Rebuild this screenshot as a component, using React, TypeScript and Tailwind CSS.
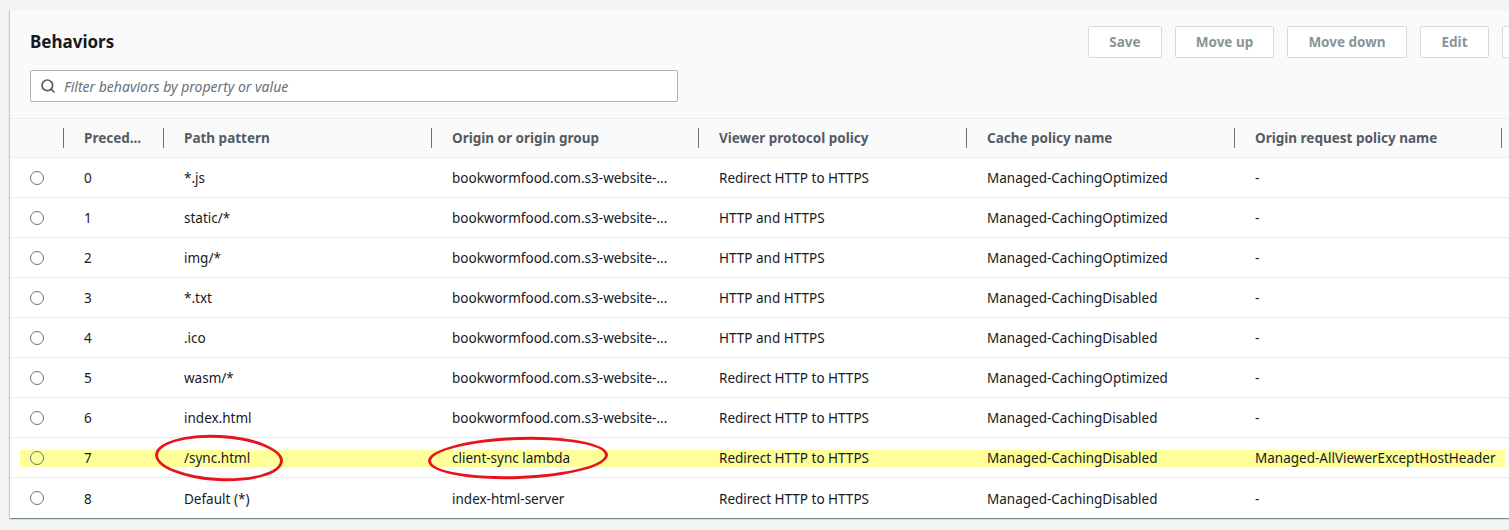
import { Search } from "lucide-react";

type Row = {
  prec: string;
  path: string;
  origin: string;
  viewer: string;
  cache: string;
  request: string;
  marked?: boolean;
};

const rows: Row[] = [
  { prec: "0", path: "*.js", origin: "bookwormfood.com.s3-website-...", viewer: "Redirect HTTP to HTTPS", cache: "Managed-CachingOptimized", request: "-" },
  { prec: "1", path: "static/*", origin: "bookwormfood.com.s3-website-...", viewer: "HTTP and HTTPS", cache: "Managed-CachingOptimized", request: "-" },
  { prec: "2", path: "img/*", origin: "bookwormfood.com.s3-website-...", viewer: "HTTP and HTTPS", cache: "Managed-CachingOptimized", request: "-" },
  { prec: "3", path: "*.txt", origin: "bookwormfood.com.s3-website-...", viewer: "HTTP and HTTPS", cache: "Managed-CachingDisabled", request: "-" },
  { prec: "4", path: ".ico", origin: "bookwormfood.com.s3-website-...", viewer: "HTTP and HTTPS", cache: "Managed-CachingDisabled", request: "-" },
  { prec: "5", path: "wasm/*", origin: "bookwormfood.com.s3-website-...", viewer: "Redirect HTTP to HTTPS", cache: "Managed-CachingOptimized", request: "-" },
  { prec: "6", path: "index.html", origin: "bookwormfood.com.s3-website-...", viewer: "Redirect HTTP to HTTPS", cache: "Managed-CachingDisabled", request: "-" },
  { prec: "7", path: "/sync.html", origin: "client-sync lambda", viewer: "Redirect HTTP to HTTPS", cache: "Managed-CachingDisabled", request: "Managed-AllViewerExceptHostHeader", marked: true },
  { prec: "8", path: "Default (*)", origin: "index-html-server", viewer: "Redirect HTTP to HTTPS", cache: "Managed-CachingDisabled", request: "-" },
];

// the last one runs past the window edge, only its border shows
const buttons = [
  { label: "Save", w: "w-[74px]" },
  { label: "Move up", w: "w-[99px]" },
  { label: "Move down", w: "w-[120px]" },
  { label: "Edit", w: "w-[69px]" },
];

const cols = "grid grid-cols-[53px_100px_268px_267px_268px_268px_267px_40px]";

function HeaderCell({ label }: { label: string }) {
  return (
    <div className="flex items-center h-full">
      <div className="w-px h-[20px] bg-[#687078]" />
      <span className="pl-5 font-bold text-[#545b64]">{label}</span>
    </div>
  );
}

export default function App() {
  return (
    <div
      className="w-[1509px] h-[530px] overflow-hidden bg-[#f2f3f3] pt-[10px] pl-[10px] text-[13.5px] text-[#16191f]"
      style={{ fontFamily: '"Noto Sans", "Open Sans", sans-serif' }}
    >
      <div className="w-[1560px] bg-white shadow-[0_1px_1px_0_rgba(0,28,36,0.3),1px_1px_1px_0_rgba(0,28,36,0.15),-1px_1px_1px_0_rgba(0,28,36,0.15)]">
        <div className="bg-[#fafafa] px-5 pt-[16px] pb-[16px] border-b border-[#eaeded]">
          <div className="flex items-center">
            <h2 className="text-[17px] font-bold leading-[32px]">Behaviors</h2>
            <div className="ml-auto flex gap-[13px]">
              {buttons.map((b) => (
                <div
                  key={b.label}
                  className={`${b.w} h-[32px] flex items-center justify-center bg-white border border-[#d5dbdb] rounded-[2px] font-bold text-[#879596]`}
                >
                  {b.label}
                </div>
              ))}
              <div className="w-[48px] h-[32px] bg-white border border-[#d5dbdb] rounded-[2px]" />
            </div>
          </div>
          <div className="mt-[12px] w-[648px] h-[32px] flex items-center border border-[#aab7b8] rounded-[2px] bg-white px-[9px]">
            <Search size={16} strokeWidth={2.5} className="text-[#545b64]" />
            <span className="ml-2 italic text-[14px] text-[#687078]">
              Filter behaviors by property or value
            </span>
          </div>
        </div>

        <div className={`${cols} h-[39px] bg-[#fafafa] border-b border-[#eaeded]`}>
          <div />
          <HeaderCell label="Preced..." />
          <HeaderCell label="Path pattern" />
          <HeaderCell label="Origin or origin group" />
          <HeaderCell label="Viewer protocol policy" />
          <HeaderCell label="Cache policy name" />
          <HeaderCell label="Origin request policy name" />
          <HeaderCell label="" />
        </div>

        {rows.map((r, i) => (
          <div
            key={r.prec}
            className={`${cols} h-[40px] items-center ${i < rows.length - 1 ? "border-b border-[#eaeded]" : ""}`}
          >
            <div className="relative h-full flex items-center justify-center pl-[1px]">
              {r.marked && <div className="absolute left-[10px] right-0 top-[12px] h-[17px] bg-[#ffff99]" />}
              <div className="relative w-[14px] h-[14px] rounded-full border-[1.5px] border-[#687078]" />
            </div>
            {[r.prec, r.path, r.origin, r.viewer, r.cache, r.request].map((v, j) => (
              <div key={j} className="relative h-full flex items-center">
                {r.marked && <div className="absolute inset-x-0 top-[12px] h-[17px] bg-[#ffff99]" />}
                <span className="relative pl-[21px] pt-[2px] whitespace-nowrap">{v}</span>
                {r.marked && j === 1 && (
                  <div className="absolute left-[-8px] top-[-3px] w-[128px] h-[46px] rounded-[50%] border-[3px] border-[#e8141b] rotate-[3deg]" />
                )}
                {r.marked && j === 2 && (
                  <div className="absolute left-[-3px] top-[-1px] w-[180px] h-[42px] rounded-[50%] border-[3px] border-[#e8141b] -rotate-[2deg]" />
                )}
              </div>
            ))}
            <div className="relative h-full">
              {r.marked && <div className="absolute left-0 w-[4px] top-[12px] h-[17px] bg-[#ffff99]" />}
            </div>
          </div>
        ))}
      </div>
    </div>
  );
}
